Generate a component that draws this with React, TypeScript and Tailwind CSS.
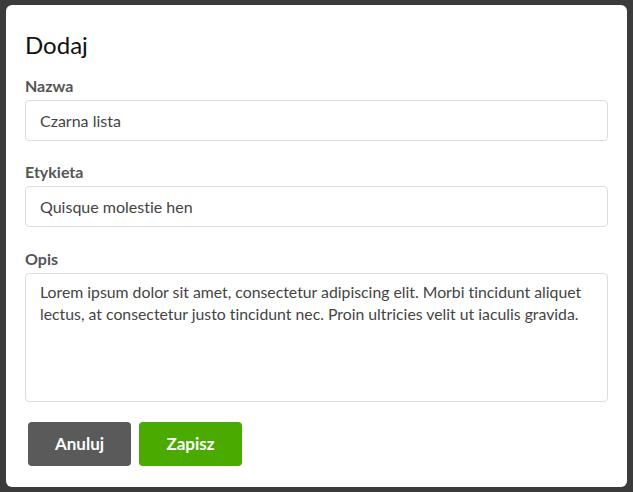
export default function App() {
  return (
    <div className="h-[492px] w-[633px] bg-[#3b3b3b] pl-[6px] pr-[6px] pt-[5px] font-['Lato','Open_Sans',sans-serif] [font-variant-ligatures:none]">
      <div className="h-[482px] rounded-[6px] bg-white px-[19px] pt-[26px]">
        <h2 className="text-[24px] leading-[28px] text-[#111]">Dodaj</h2>

        <div className="mt-[17px]">
          <label className="block text-[16px] font-bold leading-[20px] text-[#555]">Nazwa</label>
          <input
            className="mt-[4px] block h-[41px] w-full rounded-[4px] border border-[#dcdcdc] px-[14px] text-[16px] text-[#444] outline-none [font-variant-ligatures:none]"
            defaultValue="Czarna lista"
          />
        </div>

        <div className="mt-[21px]">
          <label className="block text-[16px] font-bold leading-[20px] text-[#555]">Etykieta</label>
          <input
            className="mt-[4px] block h-[41px] w-full rounded-[4px] border border-[#dcdcdc] px-[14px] text-[16px] text-[#444] outline-none [font-variant-ligatures:none]"
            defaultValue="Quisque molestie hen"
          />
        </div>

        <div className="mt-[22px]">
          <label className="block text-[16px] font-bold leading-[20px] text-[#555]">Opis</label>
          <textarea
            className="mt-[4px] block h-[129px] w-full resize-none rounded-[4px] border border-[#dcdcdc] px-[14px] py-[7px] text-[15.8px] leading-[22px] text-[#444] outline-none [font-variant-ligatures:none]"
            defaultValue="Lorem ipsum dolor sit amet, consectetur adipiscing elit. Morbi tincidunt aliquet lectus, at consectetur justo tincidunt nec. Proin ultricies velit ut iaculis gravida."
          />
        </div>

        <div className="mt-[20px] flex gap-[8px] pl-[3px]">
          <button className="h-[44px] w-[103px] rounded-[4px] bg-[#5a5a5a] text-[17px] font-bold text-white">Anuluj</button>
          <button className="h-[44px] w-[103px] rounded-[4px] bg-[#4aaa00] text-[17px] font-bold text-white">Zapisz</button>
        </div>
      </div>
    </div>
  );
}
